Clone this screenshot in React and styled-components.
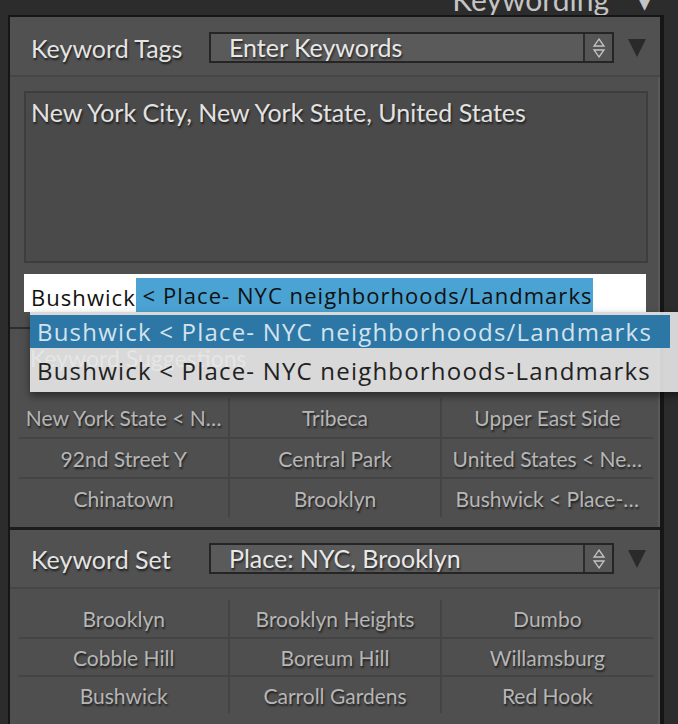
import styled, { createGlobalStyle } from "styled-components";

const GlobalStyle = createGlobalStyle`
    *, *::before, *::after {
        box-sizing: border-box;
    }
    html, body {
        margin: 0;
        padding: 0;
        background: #2c2c2c;
    }
    body {
        font-family: Lato, "Liberation Sans", sans-serif;
    }
`

const Screen = styled.div`
    position: relative;
    width: 678px;
    height: 724px;
    overflow: hidden;
    background: #2c2c2c;
    display: flex;
    flex-direction: column;
`

const TopBar = styled.div`
    height: 15px;
    flex-shrink: 0;
    overflow: hidden;
    display: flex;
    justify-content: flex-end;
    align-items: flex-end;
    gap: 28px;
    padding-right: 26px;
`

const TopTitle = styled.div`
    font-size: 30px;
    line-height: 30px;
    color: #c4c4c4;
    margin-bottom: 1px;
`

const Main = styled.div`
    flex: 1;
    display: flex;
    padding-left: 8px;
    min-height: 0;
`

const Panel = styled.div`
    width: 656px;
    border: 2px solid #161616;
    border-right-width: 4px;
    border-bottom: none;
    background: #4f4f4f;
    box-shadow: inset -2px 0 0 #5a5a5a;
    display: flex;
    flex-direction: column;
`

const Section = styled.div`
    display: flex;
    flex-direction: column;
    flex-shrink: 0;
    border-bottom: ${p => p.$sep || "none"};
    padding-bottom: ${p => p.$pb || 0}px;
`

const Header = styled.div`
    height: ${p => p.$h}px;
    display: flex;
    align-items: center;
    padding: ${p => p.$pt || 0}px 0 0 21px;
    border-bottom: 2px solid #464646;
    background: #515151;
    flex-shrink: 0;
`

const Label = styled.div`
    width: 178px;
    font-size: 25px;
    color: #e4e4e4;
    text-shadow: 1px 2px 2px #1e1e1e;
    white-space: nowrap;
`

const Select = styled.div`
    width: 405px;
    height: 31px;
    border: 2px solid #252525;
    background: #5a5a5a;
    display: flex;
    align-items: stretch;
`

const SelectText = styled.div`
    flex: 1;
    padding-left: 18px;
    font-size: 25px;
    line-height: 27px;
    color: #e8e8e8;
    text-shadow: 1px 2px 2px #262626;
    white-space: nowrap;
`

const Stepper = styled.div`
    width: 29px;
    border-left: 2px solid #2c2c2c;
    background: #555555;
    display: flex;
    align-items: center;
    justify-content: center;
`

const Disclosure = styled.div`
    margin-left: 14px;
    width: 0;
    height: 0;
    border-left: 9px solid transparent;
    border-right: 9px solid transparent;
    border-top: 18px solid #2a2a2a;
`

const TagsBody = styled.div`
    padding: 14px 12px 15px 14px;
    display: flex;
    flex-direction: column;
    gap: 11px;
`

const TagsArea = styled.div`
    height: 172px;
    border: 2px solid #3d3d3d;
    background: #4a4a4a;
    padding: 4px 5px;
    font-size: 25px;
    color: #e2e2e2;
    text-shadow: 1px 2px 2px #1e1e1e;
`

const KeywordInput = styled.div`
    height: 38px;
    margin-right: 2px;
    background: #ffffff;
    display: flex;
    align-items: flex-end;
    padding-left: 7px;
    font-family: "Open Sans", Lato, sans-serif;
    font-size: 22px;
    letter-spacing: 1.05px;
    color: #111111;
    white-space: pre;
`

const Selected = styled.span`
    background: #4ba3d3;
    line-height: 34px;
    white-space: pre;
`

const SuggestHeader = styled.div`
    height: 69px;
    padding: 0 0 12px 20px;
    display: flex;
    align-items: center;
    font-size: 23px;
    color: #c8c8c8;
`

const Grid = styled.div`
    display: grid;
    grid-template-columns: repeat(3, 1fr);
    margin: ${p => p.$mt || 0}px 7px 0 9px;
`

const Cell = styled.div`
    height: ${p => p.$first ? p.$h - 1 : p.$h}px;
    display: flex;
    align-items: center;
    justify-content: center;
    border-right: ${p => p.$last ? "none" : "2px solid #444444"};
    border-top: ${p => p.$first ? "none" : "2px solid #444444"};
    font-size: 21px;
    color: #b6b6b6;
    text-shadow: 1px 2px 2px #1f1f1f;
    white-space: nowrap;
    overflow: hidden;
`

const Dropdown = styled.div`
    position: absolute;
    left: 30px;
    top: 312px;
    width: 660px;
    padding-top: 3px;
    background: rgba(232, 232, 232, 0.9);
    box-shadow: 0 4px 8px rgba(0, 0, 0, 0.45);
`

const Option = styled.div`
    height: ${p => p.$h}px;
    width: 640px;
    display: flex;
    align-items: center;
    padding-left: 7px;
    font-family: "Open Sans", Lato, sans-serif;
    font-size: 24px;
    letter-spacing: 1.2px;
    white-space: nowrap;
    background: ${p => p.$active ? "rgba(36, 114, 162, 0.96)" : "transparent"};
    color: ${p => p.$active ? "#d3e3ee" : "#222222"};
`

function StepIcon() {
    return (
        <svg width="14" height="22" viewBox="0 0 14 22">
            <path d="M7 2 L12 9 L2 9 Z" fill="none" stroke="#c2c2c2" strokeWidth="1.3" />
            <path d="M7 20 L12 13 L2 13 Z" fill="none" stroke="#c2c2c2" strokeWidth="1.3" />
        </svg>
    )
}

function SetSelect({ value }) {
    return (
        <>
            <Select>
                <SelectText>{value}</SelectText>
                <Stepper><StepIcon /></Stepper>
            </Select>
            <Disclosure />
        </>
    )
}

function KeyGrid({ items, h, mt }) {
    return (
        <Grid $mt={mt}>
            {items.map((t, i) => (
                <Cell key={i} $h={h} $first={i < 3} $last={i % 3 === 2}>{t}</Cell>
            ))}
        </Grid>
    )
}

const suggestions = [
    "New York State < N…", "Tribeca", "Upper East Side",
    "92nd Street Y", "Central Park", "United States < Ne…",
    "Chinatown", "Brooklyn", "Bushwick < Place-…",
]

const setItems = [
    "Brooklyn", "Brooklyn Heights", "Dumbo",
    "Cobble Hill", "Boreum Hill", "Willamsburg",
    "Bushwick", "Carroll Gardens", "Red Hook",
]

export default function App() {
    return (
        <Screen>
            <GlobalStyle />
            <TopBar>
                <TopTitle>Keywording</TopTitle>
                <TopTitle>▾</TopTitle>
            </TopBar>
            <Main>
                <Panel>
                    <Section $sep="2px solid #2e2e2e">
                        <Header $h={60} $pt={3}>
                            <Label>Keyword Tags</Label>
                            <SetSelect value="Enter Keywords" />
                        </Header>
                        <TagsBody>
                            <TagsArea>New York City, New York State, United States</TagsArea>
                            <KeywordInput>
                                <span>Bushwick</span>
                                <Selected>{" < Place- NYC neighborhoods/Landmarks"}</Selected>
                            </KeywordInput>
                        </TagsBody>
                    </Section>
                    <Section $sep="3px solid #1c1c1c" $pb={10}>
                        <SuggestHeader>Keyword Suggestions</SuggestHeader>
                        <KeyGrid items={suggestions} h={40} />
                    </Section>
                    <Section>
                        <Header $h={59}>
                            <Label>Keyword Set</Label>
                            <SetSelect value="Place: NYC, Brooklyn" />
                        </Header>
                        <KeyGrid items={setItems} h={38} mt={11} />
                    </Section>
                </Panel>
            </Main>
            <Dropdown>
                <Option $active $h={33}>Bushwick &lt; Place- NYC neighborhoods/Landmarks</Option>
                <Option $h={44}>Bushwick &lt; Place- NYC neighborhoods-Landmarks</Option>
            </Dropdown>
        </Screen>
    )
}
